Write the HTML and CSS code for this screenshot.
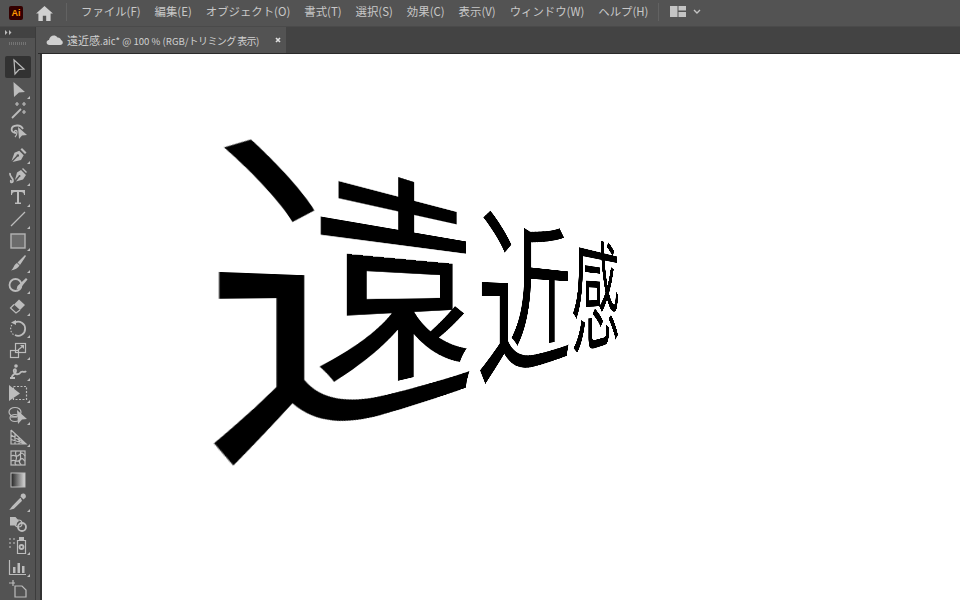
FILE: index.html
```html
<!DOCTYPE html>
<html lang="ja">
<head>
<meta charset="utf-8">
<title>遠近感.aic</title>
<link rel="stylesheet" href="styles.css">
</head>
<body>
<div class="app">
  <header class="menubar">
    <div class="ai-logo"><span>Ai</span></div>
    <svg class="home" viewBox="0 0 18 16"><path d="M9 0 L18 8 L15.5 8 L15.5 16 L10.8 16 L10.8 10.5 L7.2 10.5 L7.2 16 L2.5 16 L2.5 8 L0 8 Z"/></svg>
    <div class="sep first"></div>
    <nav class="menus">
      <span>ファイル(F)</span><span>編集(E)</span><span>オブジェクト(O)</span><span>書式(T)</span><span>選択(S)</span><span>効果(C)</span><span>表示(V)</span><span>ウィンドウ(W)</span><span>ヘルプ(H)</span>
    </nav>
    <div class="sep"></div>
    <svg class="layout" viewBox="0 0 16 11"><path d="M0 0h7.5v11H0z M8.5 0H16v4.5H8.5z M8.5 6H16v5H8.5z"/></svg>
    <svg class="chev" viewBox="0 0 8 5"><path d="M1 1l3 3 3-3"/></svg>
  </header>
  <div class="workspace">
    <aside class="toolbar">
      <div class="tool-head">
        <svg class="collapse" viewBox="0 0 7 5"><path d="M0 0l2.500 2.500L0 5z M4 0l2.500 2.500L4 5z"/></svg>
      </div>
      <div class="grip"></div>
      <div class="tools">
        <div class="tool active"><svg viewBox="0 0 20 20"><path class="o" d="M6 3 L16 12 L11 12.500 L7 17 Z"/></svg></div>
        <div class="tool more"><svg viewBox="0 0 20 20"><path class="f" d="M5.500 3 L17 13 L11 13.500 L6 18 Z"/></svg></div>
        <div class="tool"><svg viewBox="0 0 20 20"><path class="o w2" d="M4 18 L13 9"/><path class="o" d="M9 2v4M7 4h4M16 2v4M14 4h4M16 10v4M14 12h4"/></svg></div>
        <div class="tool"><svg viewBox="0 0 20 20"><path class="o w2" d="M8 11C2 10 2 4 9 3.500C12 3.300 14 5 15 7"/><path class="o" d="M7 11c-2-2 2-4 2-1c0 2-1 4-2 5"/><path class="f" d="M10 5 L19 13 L14 13.500 L11 17 Z"/></svg></div>
        <div class="tool more"><svg viewBox="0 0 20 20"><path class="f" d="M12.500 5.500 L14 4 L18.500 8.500 L17 10 Z"/><path class="f" d="M11.200 6.800 L15.700 11.300 L13 16 L4.500 18 L9.500 12.800 A1.300 1.300 0 1 0 8.500 11.800 L3.500 17 L6.500 8.800 Z"/></svg></div>
        <div class="tool more"><svg viewBox="0 0 20 20"><path class="f" d="M14 3 L15 2 L19 6 L18 7 Z"/><path class="f" d="M13 4 L18 9 L15 13.500 L8 15.500 L11.500 11 A1 1 0 1 0 10.500 10 L7 14 L9 6.500 Z"/><path class="o w2" d="M2 7 C1 11 6 12 5 15 C4.500 17 2 17 3 14"/></svg></div>
        <div class="tool more"><svg viewBox="0 0 20 20"><path class="f" d="M3 3 H17 V8 H16 C16 6 15 5 13 5 H11 V15.500 H13 V17 H7 V15.500 H9 V5 H7 C5 5 4 6 4 8 H3 Z"/></svg></div>
        <div class="tool more"><svg viewBox="0 0 20 20"><path class="o" d="M3 17 L17 3"/></svg></div>
        <div class="tool more"><svg viewBox="0 0 20 20"><rect class="box" x="3" y="3" width="14" height="14"/></svg></div>
        <div class="tool more"><svg viewBox="0 0 20 20"><path class="f" d="M17 2 L18 3 L12 12 L9.500 9.500 Z M9 10 L11.500 12.500 C10 15 7 17 3 17.500 C5.500 16 5.500 12 9 10 Z"/></svg></div>
        <div class="tool more"><svg viewBox="0 0 20 20"><circle class="o w2" cx="7.500" cy="11" r="6"/><path class="f" d="M18 4 L19.500 5.500 L12 14.500 L8.500 15.500 L9.500 12 Z"/></svg></div>
        <div class="tool more"><svg viewBox="0 0 20 20"><path class="f" d="M11 3.500 L17 9 L12 14 L6 8.500 Z"/><path class="o" d="M6 8.500 L2.500 12 L8 17 L12 14"/></svg></div>
        <div class="tool more"><svg viewBox="0 0 20 20"><path class="o w2" d="M7 4.500 A7 7 0 1 1 7 17"/><path class="o" d="M5.500 16.500 A7 7 0 0 1 3.800 7" stroke-dasharray="1.500 1.500"/><path class="f" d="M3 4.500 L8 2 L8 7 Z"/></svg></div>
        <div class="tool more"><svg viewBox="0 0 20 20"><rect class="o" x="2.500" y="10.500" width="8" height="7"/><rect class="o" x="7.500" y="3.500" width="10" height="9"/><path class="o" d="M10 10 L15 6"/><path class="f" d="M12 5 H16 V9 Z"/></svg></div>
        <div class="tool more"><svg viewBox="0 0 20 20"><path class="o w2" d="M2 17 H7 M4 17 C3 13 8 14 8 10 C8 7 5 8 6 11 C7 14 11 14 13 11 C15 10 17 12 18 10"/><circle class="f" cx="8" cy="5" r="1.800"/></svg></div>
        <div class="tool more"><svg viewBox="0 0 20 20"><rect class="dash" x="5.500" y="3.500" width="13" height="13"/><path class="f" d="M1 2 L12 10.500 L1 18 Z"/></svg></div>
        <div class="tool more"><svg viewBox="0 0 20 20"><ellipse class="o" cx="7" cy="7" rx="6" ry="4.500"/><path class="o" d="M3 12 h6"/><ellipse class="o" cx="7" cy="13" rx="5" ry="3.500"/><path class="f" d="M9 5 L19 14 L14 14.500 L10 19 Z"/></svg></div>
        <div class="tool more"><svg viewBox="0 0 20 20"><path class="o" d="M3 3 V17 H18 L3 3 M3 8 L18 17 M3 12.500 L18 17 M7 7 V17 M11 11 V17"/></svg></div>
        <div class="tool"><svg viewBox="0 0 20 20"><rect class="o" x="3" y="3" width="14" height="14"/><path class="o" d="M3 8 C7 6 8 10 11 7 S15 5 17 8 M3 13 C7 11 9 15 12 12 S15 12 17 13 M8 3 C6 7 10 8 8 12 S7 15 8 17 M13 3 C11 7 14 8 12 12 S13 15 13 17"/></svg></div>
        <div class="tool"><svg viewBox="0 0 20 20"><defs><linearGradient id="g" x1="0" x2="1"><stop offset="0" stop-color="#222"/><stop offset="1" stop-color="#d8d8d8"/></linearGradient></defs><rect x="3" y="3" width="14" height="14" fill="url(#g)" stroke="#bcbcbc"/></svg></div>
        <div class="tool more"><svg viewBox="0 0 20 20"><path class="f" d="M13 2.500 C14.500 1 17 1.500 17.500 3 C18.500 4.500 17.500 6 16.500 6.500 L15.500 7.500 L12.500 4.500 Z"/><path class="o w2" d="M13 6.500 L5 14.500 L3.500 16.500 L5.500 16 L13.500 8"/></svg></div>
        <div class="tool"><svg viewBox="0 0 20 20"><path class="f" d="M2 3 H7.500 L11 7 A5 5 0 0 0 8.500 11.500 H2 Z"/><circle class="o" cx="10.500" cy="9.500" r="3.500"/><circle class="o w2" cx="14" cy="13" r="4"/></svg></div>
        <div class="tool more"><svg viewBox="0 0 20 20"><path class="f dim" d="M1 3h2v2H1z M5 3h2v2H5z M1 7h2v2H1z M5 7h2v2H5z M1 11h2v2H1z"/><path class="o" d="M9.500 5.500 H17.500 V18.500 H9.500 Z"/><rect class="f" x="11" y="2" width="5" height="3.500"/><circle class="o w2" cx="13.500" cy="12" r="2"/></svg></div>
        <div class="tool more"><svg viewBox="0 0 20 20"><path class="o" d="M1.500 3 V17.500 H18"/><path class="f" d="M5 10h2.500v6H5z M9.500 6h2.500v10H9.500z M14 9h2.500v7H14z"/></svg></div>
        <div class="tool"><svg viewBox="0 0 20 20"><path class="o" d="M5 1 V7 M1 4 H7 M7 7 H14 L18 11 V18 H7 Z"/></svg></div>
      </div>
    </aside>
    <div class="gutter"></div>
    <main class="document">
      <div class="tabs">
        <div class="tab">
          <svg class="cloud" viewBox="0 0 17 10"><path d="M3.500 10 C0 10 -0.500 5.500 3 5 C3.500 1 8.500 -1.500 11.500 2.500 C14 2.500 15 4 15 5 C17.500 6 17.500 10 14 10 Z"/></svg>
          <span class="tab-title"><span class="cjk">遠近感</span><span class="lat">.aic* @ 100 % (RGB/</span><span class="kana">トリミング 表示)</span></span>
          <svg class="close" viewBox="0 0 6 6"><path d="M1 1l4 4M5 1l-4 4"/></svg>
        </div>
      </div>
      <div class="canvas">
        <div class="art" lang="ja">遠近感</div>
      </div>
    </main>
  </div>
</div>
</body>
</html>
```
FILE: styles.css
```css
* { box-sizing: border-box; }
html, body { margin: 0; width: 960px; height: 600px; overflow: hidden; }
body { font-family: "Noto Sans CJK JP", "Noto Sans", sans-serif; background: #535353; color: #cfcfcf; }
.app { width: 960px; height: 600px; display: flex; flex-direction: column; overflow: hidden; }

.menubar { height: 27px; flex: none; background: #535353; display: flex; align-items: center; border-bottom: 1px solid #4a4a4a; }
.ai-logo { width: 14px; height: 14px; margin-left: 9px; background: #330000; border-radius: 2px; display: flex; align-items: center; justify-content: center; }
.ai-logo span { font: bold 9px/1 "Liberation Sans", sans-serif; color: #ff9a00; }
.home { width: 17px; height: 15px; margin-left: 13px; fill: #d0d0d0; }
.sep { width: 1px; height: 18px; background: #626262; margin-left: 10px; margin-bottom: 2px; }
.sep.first { margin-left: 13px; }
.menus { display: flex; gap: 14px; margin-left: 14px; margin-bottom: 4px; font-size: 11.4px; line-height: 16px; color: #c8c8c8; white-space: nowrap; }
.layout { width: 16px; height: 11px; margin-left: 11px; margin-bottom: 3px; fill: #c4c4c4; }
.chev { width: 8px; height: 5px; margin-left: 7px; margin-bottom: 3px; fill: none; stroke: #c4c4c4; stroke-width: 1.4; }

.workspace { flex: 1; display: flex; min-height: 0; overflow: hidden; }
.toolbar { width: 36px; flex: none; background: #535353; display: flex; flex-direction: column; border-right: 1px solid #3c3c3c; overflow: hidden; }
.tool-head { height: 11px; flex: none; background: #424242; display: flex; align-items: center; padding-left: 5px; }
.collapse { width: 7px; height: 5px; fill: #bcbcbc; }
.grip { height: 3px; margin: 4px 9px 2px; flex: none; background: repeating-linear-gradient(90deg, #747474 0 1px, transparent 1px 2px); }
.tools { display: flex; flex-direction: column; align-items: center; padding-top: 9px; }
.tool { width: 26px; height: 21.75px; flex: none; position: relative; display: flex; align-items: center; justify-content: center; border-radius: 2px; }
.tool svg { width: 20px; height: 20px; display: block; }
.tool.active { background: #323232; }
.tool.more::after { content: ""; position: absolute; right: 1px; bottom: 1px; width: 0; height: 0; border-left: 3px solid transparent; border-bottom: 3px solid #bcbcbc; }
.o { fill: none; stroke: #bcbcbc; stroke-width: 1.2; }
.w2 { stroke-width: 1.8; }
.f { fill: #bcbcbc; }
.dim { fill: #8a8a8a; }
.box { fill: #6c6c6c; stroke: #b4b4b4; stroke-width: 1.4; }
.dash { fill: none; stroke: #bcbcbc; stroke-width: 1.2; stroke-dasharray: 2 1.500; }

.gutter { width: 6px; flex: none; background: #535353; border-right: 2px solid #333; }
.document { flex: 1; min-width: 0; display: flex; flex-direction: column; }
.tabs { height: 27px; flex: none; background: #434343; border-bottom: 1px solid #2a2a2a; display: flex; margin-left: -4px; }
.tab { width: 248px; height: 26px; background: #535353; display: flex; align-items: center; padding-left: 8px; }
.cloud { width: 17px; height: 10px; fill: #d0d0d0; flex: none; }
.tab-title { margin-left: 4px; margin-bottom: 2px; line-height: 14px; color: #d0d0d0; white-space: nowrap; width: 197px; overflow: hidden; }
.cjk { font-size: 11px; }
.lat { font-size: 9.6px; }
.kana { font-size: 10px; letter-spacing: -0.6px; }
.close { width: 6px; height: 6px; margin-left: 11px; stroke: #e0e0e0; stroke-width: 1.6; fill: none; flex: none; }

.canvas { flex: 1; background: #fff; position: relative; overflow: hidden; }
.art {
  position: absolute;
  left: 153px;
  top: 39px;
  width: 1200px;
  height: 400px;
  font-size: 400px;
  line-height: 400px;
  color: #000;
  white-space: nowrap;
  transform-origin: 0 50%;
  transform: matrix3d(1.372, 0, 0, 0.0024, 0, 1.001, 0, 0, 0, 0, 1, 0, 0, -18, 0, 1);
}
```
